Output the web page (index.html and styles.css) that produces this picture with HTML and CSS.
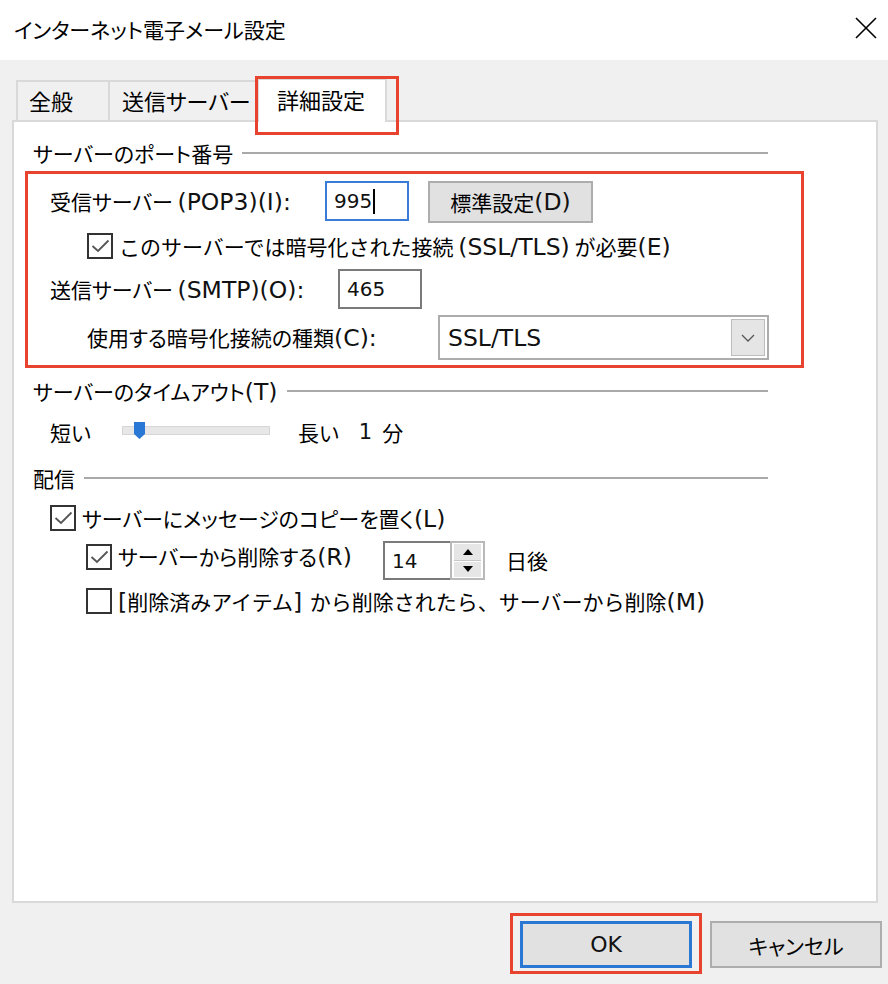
FILE: index.html
```html
<!DOCTYPE html>
<html lang="ja">
<head>
<meta charset="utf-8">
<title>インターネット電子メール設定</title>
<link rel="stylesheet" href="styles.css">
</head>
<body>
<div class="window">
  <div class="titlebar">
    <span class="title">インターネット電子メール設定</span>
    <svg class="close" width="22" height="22" viewBox="0 0 22 22"><path d="M1 1 L21 21 M21 1 L1 21" stroke="#000" stroke-width="1.6" fill="none"/></svg>
  </div>
  <div class="content">
    <div class="tabs">
      <div class="tab tab-general">全般</div>
      <div class="tab tab-send">送信サーバー</div>
      <div class="tab tab-adv selected">詳細設定</div>
    </div>
    <div class="panel">
      <div class="group-head"><span>サーバーのポート番号</span><i class="rule"></i></div>
      <div class="highlight">
        <div class="row r1">
          <span class="lbl lbl-pop">受信サーバー <span class="en">(POP3)(I):</span></span>
          <div class="field field-pop focus"><span class="en val">995</span><span class="caret"></span></div>
          <div class="btn btn-std">標準設定<span class="en">(D)</span></div>
        </div>
        <div class="row r2">
          <span class="cb"><svg width="22" height="22" viewBox="0 0 22 22"><path d="M3.5 11 L9 16 L19.5 5.5" stroke="#555" stroke-width="1.8" fill="none"/></svg></span>
          <span class="cb-text full-width">このサーバーでは暗号化された接続 <span class="en">(SSL/TLS)</span> が必要<span class="en">(E)</span></span>
        </div>
        <div class="row r3">
          <span class="lbl lbl-smtp">送信サーバー <span class="en">(SMTP)(O):</span></span>
          <div class="field field-smtp"><span class="en val">465</span></div>
        </div>
        <div class="row r4">
          <span class="lbl lbl-enc">使用する暗号化接続の種類<span class="en">(C):</span></span>
          <div class="select">
            <span class="en">SSL/TLS</span>
            <span class="drop"><svg width="14" height="8" viewBox="0 0 14 8"><path d="M1 1 L7 7 L13 1" stroke="#555" stroke-width="1.3" fill="none"/></svg></span>
          </div>
        </div>
      </div>

      <div class="group-head g2"><span>サーバーのタイムアウト<span class="en">(T)</span></span><i class="rule"></i></div>
      <div class="row slider-row">
        <span class="lbl-short">短い</span>
        <div class="track"><svg class="thumb" width="11" height="17" viewBox="0 0 11 17"><path d="M0 0 H11 V12 L5.5 17 L0 12 Z" fill="#2a78d6"/></svg></div>
        <span class="lbl-long">長い</span>
        <span class="en minutes">1</span>
        <span class="unit">分</span>
      </div>

      <div class="group-head g3"><span>配信</span><i class="rule"></i></div>
      <div class="row cb-row1">
        <span class="cb"><svg width="22" height="22" viewBox="0 0 22 22"><path d="M3.5 11 L9 16 L19.5 5.5" stroke="#555" stroke-width="1.8" fill="none"/></svg></span>
        <span class="cb-text">サーバーにメッセージのコピーを置く<span class="en">(L)</span></span>
      </div>
      <div class="row cb-row2">
        <div class="del-label">
          <span class="cb"><svg width="22" height="22" viewBox="0 0 22 22"><path d="M3.5 11 L9 16 L19.5 5.5" stroke="#555" stroke-width="1.8" fill="none"/></svg></span>
          <span class="cb-text">サーバーから削除する<span class="en">(R)</span></span>
        </div>
        <div class="spinner">
          <span class="spin-value"><span class="en val">14</span></span>
          <span class="spin-btns">
            <span class="spin-up"><svg width="10" height="6" viewBox="0 0 10 6"><path d="M0 6 L5 0 L10 6 Z" fill="#000"/></svg></span>
            <span class="spin-down"><svg width="10" height="6" viewBox="0 0 10 6"><path d="M0 0 L5 6 L10 0 Z" fill="#000"/></svg></span>
          </span>
        </div>
        <span class="days">日後</span>
      </div>
      <div class="row cb-row3">
        <span class="cb"></span>
        <span class="cb-text full-width"><span class="en">[</span>削除済みアイテム<span class="en">] </span>から削除されたら、サーバーから削除<span class="en">(M)</span></span>
      </div>
    </div>
  </div>
  <div class="buttons">
    <div class="ok-mark"><div class="btn btn-ok"><span class="en">OK</span></div></div>
    <div class="btn btn-cancel">キャンセル</div>
  </div>
</div>
</body>
</html>
```

FILE: styles.css
```css
* { box-sizing: border-box; }

html, body {
  margin: 0;
  padding: 0;
}

body {
  width: 888px;
  height: 984px;
  background: #f0f0f0;
  font-family: "Noto Sans CJK JP", sans-serif;
  font-size: 21px;
  line-height: 26px;
  color: #000;
  font-feature-settings: "palt" 1;
  overflow: hidden;
}

.en {
  font-family: "DejaVu Sans", "Noto Sans", sans-serif;
  font-size: 23.5px;
  color: #111;
}

.en.val {
  font-size: 20px;
}

.full-width {
  font-feature-settings: normal;
}

.window {
  width: 888px;
  height: 984px;
  display: flex;
  flex-direction: column;
}

/* title bar */
.titlebar {
  height: 60px;
  background: #fff;
  display: flex;
  align-items: center;
  justify-content: space-between;
  padding: 0 11px 2px 14px;
}

.title {
  font-size: 21px;
}

.close {
  display: block;
  margin-top: -2px;
}

/* content */
.content {
  padding: 0 10px 0 12px;
}

.tabs {
  margin-top: 20px;
  height: 40px;
  display: flex;
  align-items: flex-end;
  padding-left: 4px;
  position: relative;
  z-index: 2;
}

.tab {
  height: 40px;
  border: 2px solid #d9d9d9;
  border-bottom: none;
  background: #f0f0f0;
  padding-top: 5px;
  white-space: nowrap;
  font-size: 22px;
}

.tab-general {
  width: 94px;
  padding-left: 11px;
}

.tab-send {
  width: 149px;
  border-left: none;
  padding-left: 12px;
}

.tab-adv {
  width: 130px;
  margin-left: -2px;
  padding-left: 18px;
}

.tab.selected {
  height: 44px;
  margin-bottom: -2px;
  background: #fff;
  padding-top: 6px;
  position: relative;
}

.tab.selected::after {
  content: "";
  position: absolute;
  left: -4px;
  top: -4px;
  width: 138px;
  height: 53px;
  border: 3px solid #e8432e;
}

.panel {
  height: 783px;
  background: #fff;
  border: 2px solid #d9d9d9;
  padding: 18px 0 0 19px;
  position: relative;
  z-index: 1;
}

/* group headers */
.group-head {
  width: 735px;
  height: 26px;
  display: flex;
  align-items: center;
  white-space: nowrap;
}

.group-head .rule {
  flex: 1;
  height: 2px;
  background: #a9a9a9;
  margin-left: 9px;
  margin-top: -1px;
}

.g2 { margin-top: 10px; }
.g3 { margin-top: 20px; }

/* highlighted port section */
.highlight {
  width: 779px;
  margin-top: 5px;
  margin-left: -8px;
  border: 3px solid #e8432e;
  padding: 7px 0 5px 22px;
}

.row {
  display: flex;
  align-items: center;
  white-space: nowrap;
}

.r1 { height: 41px; }
.r2 { height: 26px; margin-top: 11px; padding-left: 37px; }
.r3 { height: 40px; margin-top: 10px; }
.r4 { height: 45px; margin-top: 6px; padding-left: 37px; }

.lbl-pop { width: 275px; }
.lbl-smtp { width: 288px; }
.lbl-enc { width: 351px; }

.field {
  height: 40px;
  border: 2px solid #7a7a7a;
  background: #fff;
  padding-left: 7px;
  display: flex;
  align-items: center;
}

.field-pop {
  width: 84px;
  height: 40px;
  margin-top: -1px;
}

.field.focus {
  border-color: #3a7bd5;
}

.caret {
  display: inline-block;
  width: 2px;
  height: 25px;
  background: #000;
  margin-left: 1px;
}

.field-smtp {
  width: 84px;
  height: 40px;
}

.btn {
  background: #e1e1e1;
  border: 2px solid #adadad;
  display: flex;
  align-items: center;
  justify-content: center;
}

.btn-std {
  width: 165px;
  height: 42px;
  margin-left: 19px;
}

.cb {
  width: 26px;
  height: 26px;
  border: 2px solid #333;
  background: #fff;
  display: inline-flex;
  flex: none;
}

.cb svg { display: block; }

.cb-text {
  margin-left: 6px;
}

.select {
  width: 331px;
  height: 45px;
  border: 2px solid #adadad;
  background: #fff;
  display: flex;
  align-items: center;
  justify-content: space-between;
  padding: 0 2px 0 8px;
}

.drop {
  width: 34px;
  height: 37px;
  background: #e5e5e5;
  border: 1px solid #bdbdbd;
  display: flex;
  align-items: center;
  justify-content: center;
}

.drop svg { display: block; }

/* slider */
.slider-row {
  height: 26px;
  margin-top: 15px;
  padding-left: 17px;
}

.lbl-short { width: 72px; }

.track {
  width: 148px;
  height: 9px;
  background: #e7e7e7;
  border: 1px solid #d6d6d6;
  position: relative;
  margin-top: -4px;
}

.thumb {
  position: absolute;
  left: 11px;
  top: -5px;
  display: block;
}

.lbl-long {
  margin-left: 28px;
}

.minutes {
  margin-left: 20px;
  font-size: 21px;
}

.unit {
  margin-left: 10px;
}

/* delivery */
.cb-row1 {
  height: 26px;
  margin-top: 14px;
  padding-left: 17px;
}

.cb-row2 {
  height: 39px;
  margin-top: 10px;
  padding-left: 53px;
  align-items: flex-start;
}

.del-label {
  width: 297px;
  display: flex;
  align-items: center;
  margin-top: 2px;
}

.spinner {
  width: 102px;
  height: 39px;
  display: flex;
}

.spin-value {
  flex: 1;
  border: 2px solid #7a7a7a;
  border-right: none;
  padding-left: 7px;
  display: flex;
  align-items: center;
}

.spin-btns {
  width: 35px;
  display: flex;
  flex-direction: column;
  border: 2px solid #b9b9b9;
  background: #fff;
}

.spin-up, .spin-down {
  flex: 1;
  background: #e6e6e6;
  display: flex;
  align-items: center;
  justify-content: center;
  margin: 1px 2px;
}

.spin-up { border-bottom: 1px solid #c8c8c8; margin-bottom: 0; }

.spin-up svg, .spin-down svg { display: block; }

.days {
  margin-left: 21px;
  line-height: 39px;
}

.cb-row3 {
  height: 26px;
  margin-top: 8px;
  padding-left: 53px;
}

/* bottom buttons */
.buttons {
  margin-top: 10px;
  display: flex;
  justify-content: flex-end;
  align-items: flex-start;
  padding-right: 6px;
}

.ok-mark {
  border: 3px solid #e8432e;
  padding: 5px 7px 3px 7px;
}

.btn-ok {
  width: 172px;
  height: 47px;
  border: 3px solid #2b78d4;
}

.btn-ok .en {
  font-size: 22px;
}

.btn-cancel {
  width: 172px;
  height: 47px;
  margin-top: 8px;
  margin-left: 8px;
}
```
